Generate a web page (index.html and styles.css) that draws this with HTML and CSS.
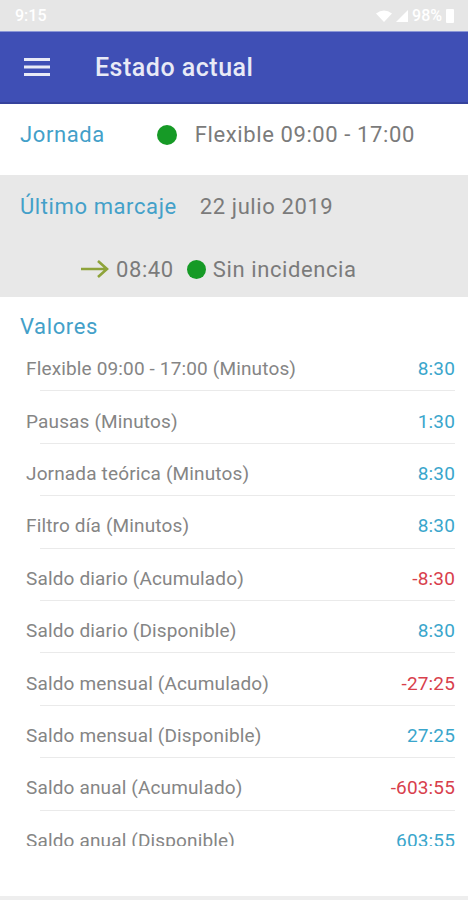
FILE: index.html
```html
<!DOCTYPE html>
<html lang="es">

<head>
  <meta charset="UTF-8">
  <title>Estado actual</title>
  <link rel="stylesheet" href="styles.css">
</head>

<body>
  <div class="screen">
    <div class="statusbar">
      <span class="clock">9:15</span>
      <div class="status-icons">
        <svg width="16" height="12" viewBox="0 0 16 12"><path d="M0 3.5 Q8 -2.5 16 3.5 L8 12 Z" fill="#fff"/></svg>
        <svg width="12" height="12" viewBox="0 0 12 12"><path d="M12 0 V12 H0 Z" fill="#fff"/></svg>
        <span class="battery-pct">98%</span>
        <span class="battery"></span>
      </div>
    </div>

    <header class="appbar">
      <svg class="menu" width="26" height="20" viewBox="0 0 26 20">
        <rect x="0" y="1" width="26" height="3" fill="#e8eaf6"/>
        <rect x="0" y="8.5" width="26" height="3" fill="#e8eaf6"/>
        <rect x="0" y="16" width="26" height="3" fill="#e8eaf6"/>
      </svg>
      <h1>Estado actual</h1>
    </header>

    <section class="jornada">
      <span class="label">Jornada</span>
      <span class="dot"></span>
      <span class="muted">Flexible 09:00 - 17:00</span>
    </section>

    <section class="marcaje">
      <div class="marcaje__top">
        <span class="label">Último marcaje</span>
        <span class="muted">22 julio 2019</span>
      </div>
      <div class="marcaje__bottom">
        <svg class="arrow" width="30" height="20" viewBox="0 0 30 20">
          <path d="M1 10 H27 M18 2 L27 10 L18 18" fill="none" stroke="#8ea33a" stroke-width="2.6"/>
        </svg>
        <span class="muted">08:40</span>
        <span class="dot dot--small"></span>
        <span class="muted">Sin incidencia</span>
      </div>
    </section>

    <section class="valores">
      <h2 class="label">Valores</h2>
      <div class="list">
        <div class="row"><span>Flexible 09:00 - 17:00 (Minutos)</span><span class="val">8:30</span></div>
        <div class="row"><span>Pausas (Minutos)</span><span class="val">1:30</span></div>
        <div class="row"><span>Jornada teórica (Minutos)</span><span class="val">8:30</span></div>
        <div class="row"><span>Filtro día (Minutos)</span><span class="val">8:30</span></div>
        <div class="row"><span>Saldo diario (Acumulado)</span><span class="val neg">-8:30</span></div>
        <div class="row"><span>Saldo diario (Disponible)</span><span class="val">8:30</span></div>
        <div class="row"><span>Saldo mensual (Acumulado)</span><span class="val neg">-27:25</span></div>
        <div class="row"><span>Saldo mensual (Disponible)</span><span class="val">27:25</span></div>
        <div class="row"><span>Saldo anual (Acumulado)</span><span class="val neg">-603:55</span></div>
        <div class="row"><span>Saldo anual (Disponible)</span><span class="val">603:55</span></div>
      </div>
    </section>

    <div class="bottom"></div>
  </div>
</body>

</html>
```

FILE: styles.css
```css
* {
  margin: 0;
  padding: 0;
  box-sizing: border-box;
  font-family: Roboto, "Liberation Sans", sans-serif;
}

body {
  background-color: #fff;
}

.screen {
  width: 468px;
  height: 900px;
  display: flex;
  flex-direction: column;
  overflow: hidden;
}

.statusbar {
  height: 31px;
  background-color: #e6e6e6;
  display: flex;
  align-items: center;
  justify-content: space-between;
  padding: 0 14px 0 15px;
  color: #fff;
  font-size: 16px;
  font-weight: 500;
}

.status-icons {
  display: flex;
  align-items: center;
  gap: 4px;
}

.battery {
  width: 8px;
  height: 14px;
  background-color: #fff;
  border-radius: 1px;
}

.appbar {
  height: 73px;
  background-color: #3f4fb5;
  border-top: 1px solid #8c97d6;
  border-bottom: 2px solid #35429c;
  display: flex;
  align-items: center;
  padding-left: 24px;
}

.appbar h1 {
  margin-left: 45px;
  color: #e8eaf6;
  font-size: 25px;
  font-weight: 500;
  letter-spacing: 0.5px;
}

.label {
  color: #43a0c9;
  font-size: 22px;
  font-weight: 400;
  letter-spacing: 0.6px;
}

.muted {
  color: #7b7b7b;
  font-size: 22px;
  letter-spacing: 0.6px;
}

.dot {
  width: 20px;
  height: 20px;
  border-radius: 50%;
  background-color: #169a26;
}

.dot--small {
  width: 19px;
  height: 19px;
  margin: 0 7px 0 13px;
}

.jornada {
  height: 71px;
  display: flex;
  align-items: center;
  padding: 0 0 10px 20px;
}

.jornada .dot {
  margin: 0 18px 0 52px;
}

.marcaje {
  height: 122px;
  background-color: #e8e8e8;
  padding: 18px 0 0 20px;
}

.marcaje__top {
  display: flex;
  align-items: center;
  gap: 23px;
  height: 26px;
}

.marcaje__bottom {
  display: flex;
  align-items: center;
  height: 26px;
  margin-top: 37px;
  padding-left: 60px;
}

.marcaje__bottom .arrow {
  margin-right: 6px;
}

.valores {
  padding-top: 18px;
}

.valores h2 {
  padding-left: 20px;
  line-height: 24px;
}

.list {
  height: 507px;
  overflow: hidden;
  padding: 0 13px 0 26px;
}

.row {
  display: flex;
  justify-content: space-between;
  align-items: center;
  height: 52.4px;
  padding: 18px 0 10px;
  line-height: 24px;
  font-size: 19px;
  letter-spacing: 0.15px;
  color: #858585;
  background: linear-gradient(#eaeaea, #eaeaea) no-repeat 14px 100% / calc(100% - 14px) 1px;
}

.val {
  color: #3aa6cc;
}

.neg {
  color: #d8404c;
}

.bottom {
  margin-top: auto;
  height: 4px;
  background-color: #eeeeee;
}
```
